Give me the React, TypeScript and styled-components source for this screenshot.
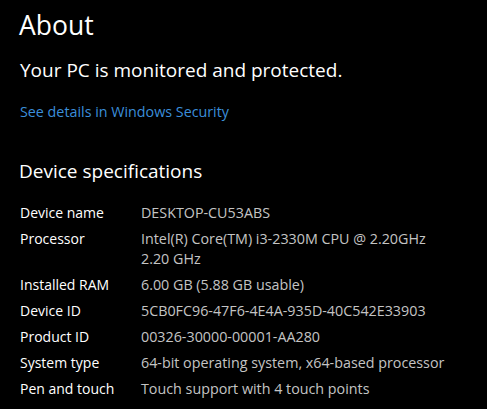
import React from 'react';
import styled, { createGlobalStyle } from 'styled-components';

const GlobalStyle = createGlobalStyle`
  html, body {
    margin: 0;
    padding: 0;
    background: #000;
  }
  body {
    font-family: "Open Sans", "Noto Sans", sans-serif;
    color: #fff;
  }
`;

const Page = styled.div`
  display: flex;
  flex-direction: column;
  width: 487px;
  height: 409px;
  overflow: hidden;
  padding: 0 0 0 20px;
  box-sizing: border-box;
  background: #000;
`;

const PageTitle = styled.h1`
  margin: 6px 0 0 -1px;
  font-size: 26.5px;
  font-weight: 400;
  line-height: 38px;
  color: #fff;
`;

const Status = styled.h2`
  margin: 13px 0 0 0;
  font-size: 19px;
  font-weight: 400;
  line-height: 26px;
  color: #fff;
`;

const Link = styled.a`
  margin-top: 19px;
  font-size: 14.3px;
  line-height: 20px;
  color: #3b8eda;
  text-decoration: none;
  cursor: pointer;
`;

const SectionTitle = styled.h2`
  margin: 36px 0 0 -1px;
  font-size: 19px;
  font-weight: 400;
  line-height: 26px;
  color: #fff;
`;

const SpecList = styled.dl`
  display: grid;
  grid-template-columns: 121px 1fr;
  row-gap: 6px;
  margin: 19px 0 0 0;
`;

const SpecLabel = styled.dt`
  font-size: 14px;
  line-height: 20px;
  color: #fff;
`;

const SpecValue = styled.dd`
  margin: 0;
  font-size: 14.3px;
  line-height: 20px;
  color: #c4c4c4;
`;

const specs: [string, string][] = [
  ['Device name', 'DESKTOP-CU53ABS'],
  ['Processor', 'Intel(R) Core(TM) i3-2330M CPU @ 2.20GHz\n2.20 GHz'],
  ['Installed RAM', '6.00 GB (5.88 GB usable)'],
  ['Device ID', '5CB0FC96-47F6-4E4A-935D-40C542E33903'],
  ['Product ID', '00326-30000-00001-AA280'],
  ['System type', '64-bit operating system, x64-based processor'],
  ['Pen and touch', 'Touch support with 4 touch points'],
];

const App = () => {
  return (
    <>
      <GlobalStyle />
      <Page>
        <PageTitle>About</PageTitle>
        <Status>Your PC is monitored and protected.</Status>
        <Link>See details in Windows Security</Link>
        <SectionTitle>Device specifications</SectionTitle>
        <SpecList>
          {specs.map(([label, value]) => (
            <React.Fragment key={label}>
              <SpecLabel>{label}</SpecLabel>
              <SpecValue>
                {value.split('\n').map((line, i) => (
                  <div key={i}>{line}</div>
                ))}
              </SpecValue>
            </React.Fragment>
          ))}
        </SpecList>
      </Page>
    </>
  );
};

export default App;
